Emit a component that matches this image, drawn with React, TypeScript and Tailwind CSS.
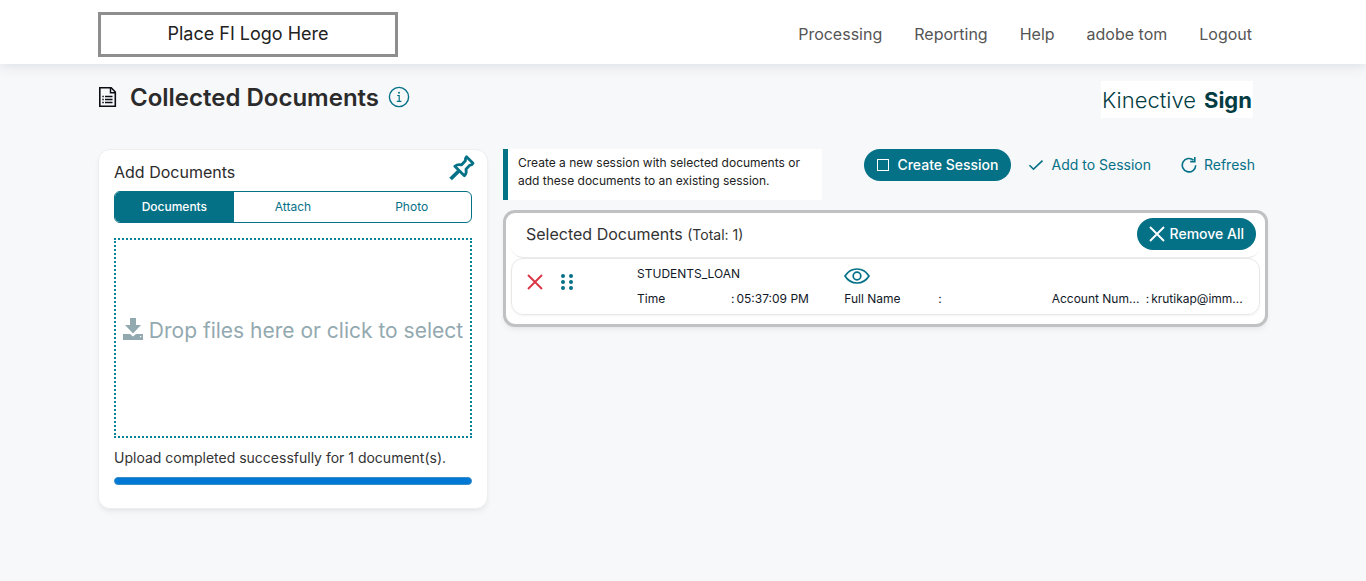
import { useState } from "react";

const navLinks = ["Processing", "Reporting", "Help", "adobe tom", "Logout"];

const tabs = ["Documents", "Attach", "Photo"];

const documents = [
  {
    name: "STUDENTS_LOAN",
    fields: [
      { label: "Time", value: "05:37:09 PM" },
      { label: "Full Name", value: "" },
      { label: "Account Num...", value: "krutikap@imm..." },
    ],
  },
];

function DocumentIcon() {
  return (
    <svg className="h-5 w-5" viewBox="0 0 20 20" fill="none" stroke="#0b0f14" aria-hidden="true">
      <path d="M1.8.8h11.400L17.300 5v14.200H1.800z" strokeWidth="1.600" />
      <path d="M12.500 1v4.800h4.800" strokeWidth="1.500" />
      <path d="M7 9.500h7.500M7 12.500h7.500M7 15.500h7.500" strokeWidth="1.400" />
      <path d="M4.300 9.500h1.500M4.300 12.500h1.500M4.300 15.500h1.500" strokeWidth="1.400" />
    </svg>
  );
}

function InfoIcon() {
  return (
    <svg className="h-[22px] w-[22px]" viewBox="0 0 22 22" fill="none" stroke="#057187" aria-hidden="true">
      <circle cx="11" cy="11" r="9.600" strokeWidth="1.400" />
      <path d="M9.200 9.500h2v5.500M8.800 15.400h4.600" strokeWidth="1.200" />
      <circle cx="11" cy="6.800" r="1" fill="#057187" stroke="none" />
    </svg>
  );
}

function PinIcon() {
  return (
    <svg className="h-7 w-7" viewBox="0 0 28 28" fill="none" stroke="currentColor" strokeLinejoin="round" aria-hidden="true">
      <path d="M18.500 2.800L25 9.200c-.6 1.400-1.700 2-3.200 1.900l-3.800 4.200c.7 2.600.2 4.600-1.600 6.400L6.800 12.300c2-1.700 4-2.100 6.600-1.400l4-4.100c-.2-1.800.1-3.100 1.100-4z" strokeWidth="2.800" />
      <path d="M10.800 17L2.600 25" strokeWidth="3.800" />
    </svg>
  );
}

function DropIcon() {
  return (
    <svg className="h-[22px] w-5 shrink-0" viewBox="0 0 20 22" fill="currentColor" aria-hidden="true">
      <path d="M7 0h6v7h5l-8 8.500L2 7h5z" />
      <path fillRule="evenodd" d="M0 16h7l3 2.500 3-2.500h7v6H0zM17 18v1.200h1.200V18z" />
    </svg>
  );
}

function CheckIcon() {
  return (
    <svg className="h-4 w-4" viewBox="0 0 16 16" fill="none" stroke="currentColor" strokeWidth="1.600" aria-hidden="true">
      <path d="M1.500 8.200l4 4L14.500 3.600" />
    </svg>
  );
}

function RefreshIcon() {
  return (
    <svg className="h-4 w-4" viewBox="0 0 16 16" fill="none" stroke="currentColor" strokeWidth="1.600" aria-hidden="true">
      <path d="M14.700 8.300A6.700 6.700 0 1 1 12.500 3.200" />
      <path d="M13.800 0v4.600H9.200" />
    </svg>
  );
}

function CrossIcon() {
  return (
    <svg className="h-4 w-4" viewBox="0 0 16 16" fill="none" stroke="currentColor" strokeWidth="1.900" aria-hidden="true">
      <path d="M1 1l14 14M15 1L1 15" />
    </svg>
  );
}

function GripIcon() {
  return (
    <svg className="h-4 w-3" viewBox="0 0 12 16" fill="currentColor" aria-hidden="true">
      <circle cx="2" cy="2" r="2" />
      <circle cx="10" cy="2" r="2" />
      <circle cx="2" cy="8" r="2" />
      <circle cx="10" cy="8" r="2" />
      <circle cx="2" cy="14" r="2" />
      <circle cx="10" cy="14" r="2" />
    </svg>
  );
}

function EyeIcon() {
  return (
    <svg className="h-4 w-[26px]" viewBox="0 0 26 16" fill="none" stroke="currentColor" strokeWidth="1.700" aria-hidden="true">
      <path d="M1 8C4 3.200 8 1 13 1s9 2.200 12 7c-3 4.800-7 7-12 7S4 12.800 1 8z" />
      <circle cx="13" cy="8" r="3.800" />
    </svg>
  );
}

function AddDocuments() {
  const [tab, setTab] = useState("Documents");

  return (
    <section className="rounded-xl border border-[#eceef0] bg-white px-[15px] pb-[23px] shadow-md shadow-black/5">
      <div className="flex h-[41px] items-start justify-between pt-1">
        <h2 className="pt-1.5 text-base text-[#2b2b2b]">Add Documents</h2>
        <button type="button" className="-mr-1 text-[#057187]" aria-label="Pin panel">
          <PinIcon />
        </button>
      </div>

      <div className="flex h-8 overflow-hidden rounded-md border border-[#057187] text-xs">
        {tabs.map((name) => (
          <button
            key={name}
            type="button"
            onClick={() => setTab(name)}
            className={tab === name ? "flex-1 bg-[#057187] font-medium text-white" : "flex-1 text-[#057187]"}
          >
            {name}
          </button>
        ))}
      </div>

      <label className="mt-[15px] flex h-[200px] cursor-pointer items-center justify-center border-2 border-dotted border-[#07839a] pb-[18px] text-[#93a9b0]">
        <input type="file" multiple className="sr-only" />
        <DropIcon />
        <span className="ml-1.5 pt-1 text-[21px] leading-8 whitespace-nowrap">Drop files here or click to select</span>
      </label>

      <p className="mt-2.5 text-sm text-[#333]">Upload completed successfully for 1 document(s).</p>
      <div className="mt-[9px] h-2 rounded-full border border-[#3a8cc8] bg-[#0078d4]" />
    </section>
  );
}

function SelectedDocuments() {
  return (
    <section className="mt-[10px] rounded-xl border-[3px] border-[#bfc1c3] bg-white px-[5px] pt-[5px] pb-[9px] shadow-md shadow-black/5">
      <div className="flex h-10 items-start justify-between rounded-b-xl border-b border-[#ebebeb] pr-1 pl-[15px]">
        <h2 className="pt-1 text-base text-[#333]">
          Selected Documents <span className="text-sm">(Total: {documents.length})</span>
        </h2>
        <button
          type="button"
          className="flex h-8 items-center gap-[5px] rounded-full bg-[#057187] px-3 text-sm font-medium text-white"
        >
          <CrossIcon />
          Remove All
        </button>
      </div>

      <ul>
        {documents.map((doc) => (
          <li
            key={doc.name}
            className="flex h-[57px] rounded-xl border border-[#e8e8e8] pl-[15px] text-xs text-[#111827] shadow-xs"
          >
            <div className="flex w-[110px] shrink-0 items-start gap-[18px] pt-[15px]">
              <button type="button" className="text-[#dc3545]" aria-label={`Remove ${doc.name}`}>
                <CrossIcon />
              </button>
              <button type="button" className="text-[#057187]" aria-label={`Move ${doc.name}`}>
                <GripIcon />
              </button>
            </div>
            <div className="min-w-0 flex-1 pt-1.5">
              <div className="grid grid-cols-3">
                <span className="pt-px">{doc.name}</span>
                <button type="button" className="mt-[3px] justify-self-start text-[#057187]" aria-label={`View ${doc.name}`}>
                  <EyeIcon />
                </button>
              </div>
              <dl className="mt-[7px] grid grid-cols-3">
                {doc.fields.map((field) => (
                  <div key={field.label} className="flex">
                    <dt className="w-[94px] whitespace-nowrap">{field.label}</dt>
                    <dd className="flex gap-[2px] whitespace-nowrap">
                      <span>:</span>
                      {field.value}
                    </dd>
                  </div>
                ))}
              </dl>
            </div>
          </li>
        ))}
      </ul>
    </section>
  );
}

export default function App() {
  return (
    <div className="min-h-screen bg-[#f7f8fa] font-[Inter,sans-serif]">
      <header className="bg-white shadow-[0_2px_12px_rgba(60,90,110,0.15)]">
        <div className="mx-auto flex h-16 max-w-[1170px] items-center justify-between pt-1 pr-4">
          <a
            href="#"
            className="flex h-[45px] w-[300px] items-center justify-center border-3 border-[#8e8e8e] text-lg text-[#222]"
          >
            Place FI Logo Here
          </a>
          <nav className="flex gap-8 text-base text-[#555]">
            {navLinks.map((link) => (
              <a key={link} href="#">
                {link}
              </a>
            ))}
          </nav>
        </div>
      </header>

      <main className="mx-auto max-w-[1170px]">
        <div className="flex items-start justify-between pt-[17px] pr-[15px]">
          <div className="flex h-8 items-center">
            <DocumentIcon />
            <h1 className="ml-3 pt-0.5 text-2xl font-semibold text-[#2b2b2b]">Collected Documents</h1>
            <button type="button" className="ml-[9px]" aria-label="About collected documents">
              <InfoIcon />
            </button>
          </div>
          <div className="flex h-[37px] w-[152px] items-center justify-center bg-white pt-0.5 text-[22px] whitespace-nowrap text-[#033c42]">
            <span className="font-light">Kinective</span>
            <span className="ml-2 font-bold">Sign</span>
          </div>
        </div>

        <div className="mt-[31px] grid grid-cols-[minmax(0,390px)_minmax(0,1fr)] items-start gap-[15px]">
          <AddDocuments />

          <div className="min-w-0">
            <div className="flex items-start justify-between">
              <p className="h-[51px] w-[319px] border-l-5 border-[#057187] bg-white pt-[5px] pl-2.5 text-xs leading-[18px] text-[#222]">
                Create a new session with selected documents or add these documents to an existing session.
              </p>
              <div className="flex pr-[13px] text-sm text-[#057187]">
                <button
                  type="button"
                  className="flex h-8 items-center rounded-full bg-[#057187] px-[13px] font-medium text-white"
                >
                  <span className="mr-2 h-3 w-3 border border-white" />
                  Create Session
                </button>
                <button type="button" className="ml-[17px] flex h-8 items-center gap-[7px]">
                  <CheckIcon />
                  Add to Session
                </button>
                <button type="button" className="ml-[30px] flex h-8 items-center gap-[7px]">
                  <RefreshIcon />
                  Refresh
                </button>
              </div>
            </div>
            <SelectedDocuments />
          </div>
        </div>
      </main>
    </div>
  );
}
